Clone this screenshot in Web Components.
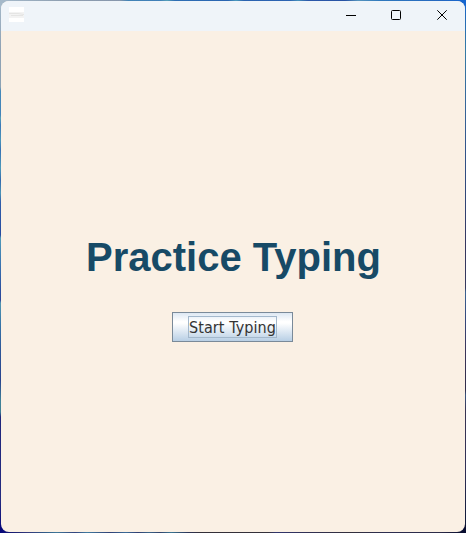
<!DOCTYPE html>
<html lang="en">
<head>
<meta charset="utf-8">
<title>Practice Typing</title>
<style>
html, body { margin: 0; height: 100%; overflow: hidden; }
body { font-family: "Liberation Sans", Arial, sans-serif; }
</style>
</head>
<body>
<desktop-backdrop>
  <app-window>
    <title-bar slot="bar"></title-bar>
    <app-heading>Practice Typing</app-heading>
    <metal-button>Start Typing</metal-button>
  </app-window>
</desktop-backdrop>
<script>
function define(name, html) {
  const template = document.createElement('template');
  template.innerHTML = html;
  customElements.define(name, class extends HTMLElement {
    constructor() {
      super();
      this.attachShadow({ mode: 'open' }).append(template.content.cloneNode(true));
    }
  });
}

define('desktop-backdrop', `
<style>
:host {
  display: flex; box-sizing: border-box; width: 466px; height: 533px; padding: 1px;
  background:
    linear-gradient(90deg, #a5b9ca 0, #8fa0b2 60px, #8796ac 120px, #4283b6 128px, #3f7fb8 160px, #55a0b8 167px, #2e6eb4 175px, #2964b1 228px, #4a9abc 236px, #2b62b0 244px, #2c63b2 290px, #4590bb 298px, #2b58aa 308px, #2752a4 345px, #5694bd 358px, #2f78bd 380px, #2568c0 440px, #1666d0 466px) 0 0 / 466px 8px no-repeat,
    linear-gradient(90deg, #06067a 0, #1c2172 15px, #333a7c 28px, #315a87 45px, #3f7899 57px, #33437d 75px, #407ba0 87px, #304075 110px, #3a6b98 126px, #303d70 138px, #3a6588 149px, #31416a 160px, #3a7592 171px, #2b3458 188px, #332f38 200px, #34313a 268px, #31356e 276px, #303052 310px, #332f3c 350px, #2c2d50 385px, #2c2b48 440px, #080d30 462px) 0 100% / 466px 8px no-repeat,
    linear-gradient(180deg, #a5b9ca 0, #8fa2b4 50px, #8ba2b4 87px, #4388b9 91px, #4283b9 115px, #56a1b8 118px, #3b78b8 125px, #4a96ba 140px, #3671b4 150px, #4c9aba 168px, #3269ae 180px, #4b94b6 193px, #305eaa 202px, #264ba0 235px, #4f9ab9 238px, #3c78b2 262px, #2b4f9f 290px, #2b469a 300px, #5196b1 303px, #3674a8 325px, #2e5798 350px, #28438e 380px, #3f8299 401px, #3e7e94 412px, #1f267c 417px, #242b80 500px, #03037a 533px) 0 0 / 8px 100% no-repeat,
    linear-gradient(180deg, #1666d0 0, #246bb7 20px, #347ba6 50px, #36689c 100px, #31548b 150px, #304577 200px, #35365f 245px, #36395e 288px, #3b6292 292px, #34477c 320px, #3b355a 350px, #302c49 390px, #395580 395px, #383452 410px, #303057 470px, #071432 533px) 100% 0 / 8px 100% no-repeat;
}
</style><slot></slot>`);

define('app-window', `
<style>
:host { display: flex; flex-direction: column; flex: 1; overflow: hidden; border-radius: 8px; background: #faf0e4; }
main { display: flex; flex: 1; flex-direction: column; align-items: center; padding-top: 203px; }
</style><slot name="bar"></slot><main><slot></slot></main>`);

define('title-bar', `
<style>
:host { display: flex; flex: none; height: 30px; background: #eff4f9; }
.app { margin: 6px 0 0 8px; }
.controls { display: flex; margin-left: auto; }
.controls svg { display: block; width: 46px; height: 30px; }
.controls svg:last-child { width: 45px; }
</style>
<svg class="app" width="15" height="15" viewBox="0 0 15 15" aria-hidden="true">
  <rect width="15" height="15" fill="#fff"/>
  <rect y="5" width="15" height="6" fill="#f3f3f3"/>
  <path d="M0 6.5h9l6 1M2 8.5h12" stroke="#e5e5e4" fill="none"/>
</svg>
<div class="controls">
  <svg viewBox="0 0 46 30" aria-label="Minimize"><path d="M18 14.5h10" stroke="#000"/></svg>
  <svg viewBox="0 0 46 30" aria-label="Maximize"><rect x="17.5" y="9.5" width="9" height="9" rx="1" fill="none" stroke="#000"/></svg>
  <svg viewBox="0 0 45 30" aria-label="Close"><path d="M17.3 9.3l9.4 9.4M26.7 9.3l-9.4 9.4" stroke="#000" fill="none"/></svg>
</div>`);

define('app-heading', `
<style>
:host { display: block; }
h1 { margin: 0; padding-left: 1px; color: #174a66; font: bold 40px/46px "Liberation Sans", Arial, sans-serif; white-space: nowrap; }
</style><h1><slot></slot></h1>`);

define('metal-button', `
<style>
:host { display: block; margin: 32px 1px 0 0; }
button {
  display: flex; align-items: center; justify-content: center; box-sizing: border-box;
  width: 121px; height: 30px; margin: 0; padding: 0; border: 1px solid #7a8a99; border-radius: 0;
  background: linear-gradient(180deg, #dde8f3 0, #fff 30%, #fff 36%, #b8cfe5 100%);
  color: #333; font: 16px/21px "DejaVu Sans Condensed", "DejaVu Sans", sans-serif; font-stretch: condensed; letter-spacing: 0.1px;
}
span { box-sizing: border-box; display: flex; justify-content: center; width: 89px; height: 22px; border: 1px solid #a3b8cc; white-space: nowrap; }
</style><button><span><slot></slot></span></button>`);
</script>
</body>
</html>
